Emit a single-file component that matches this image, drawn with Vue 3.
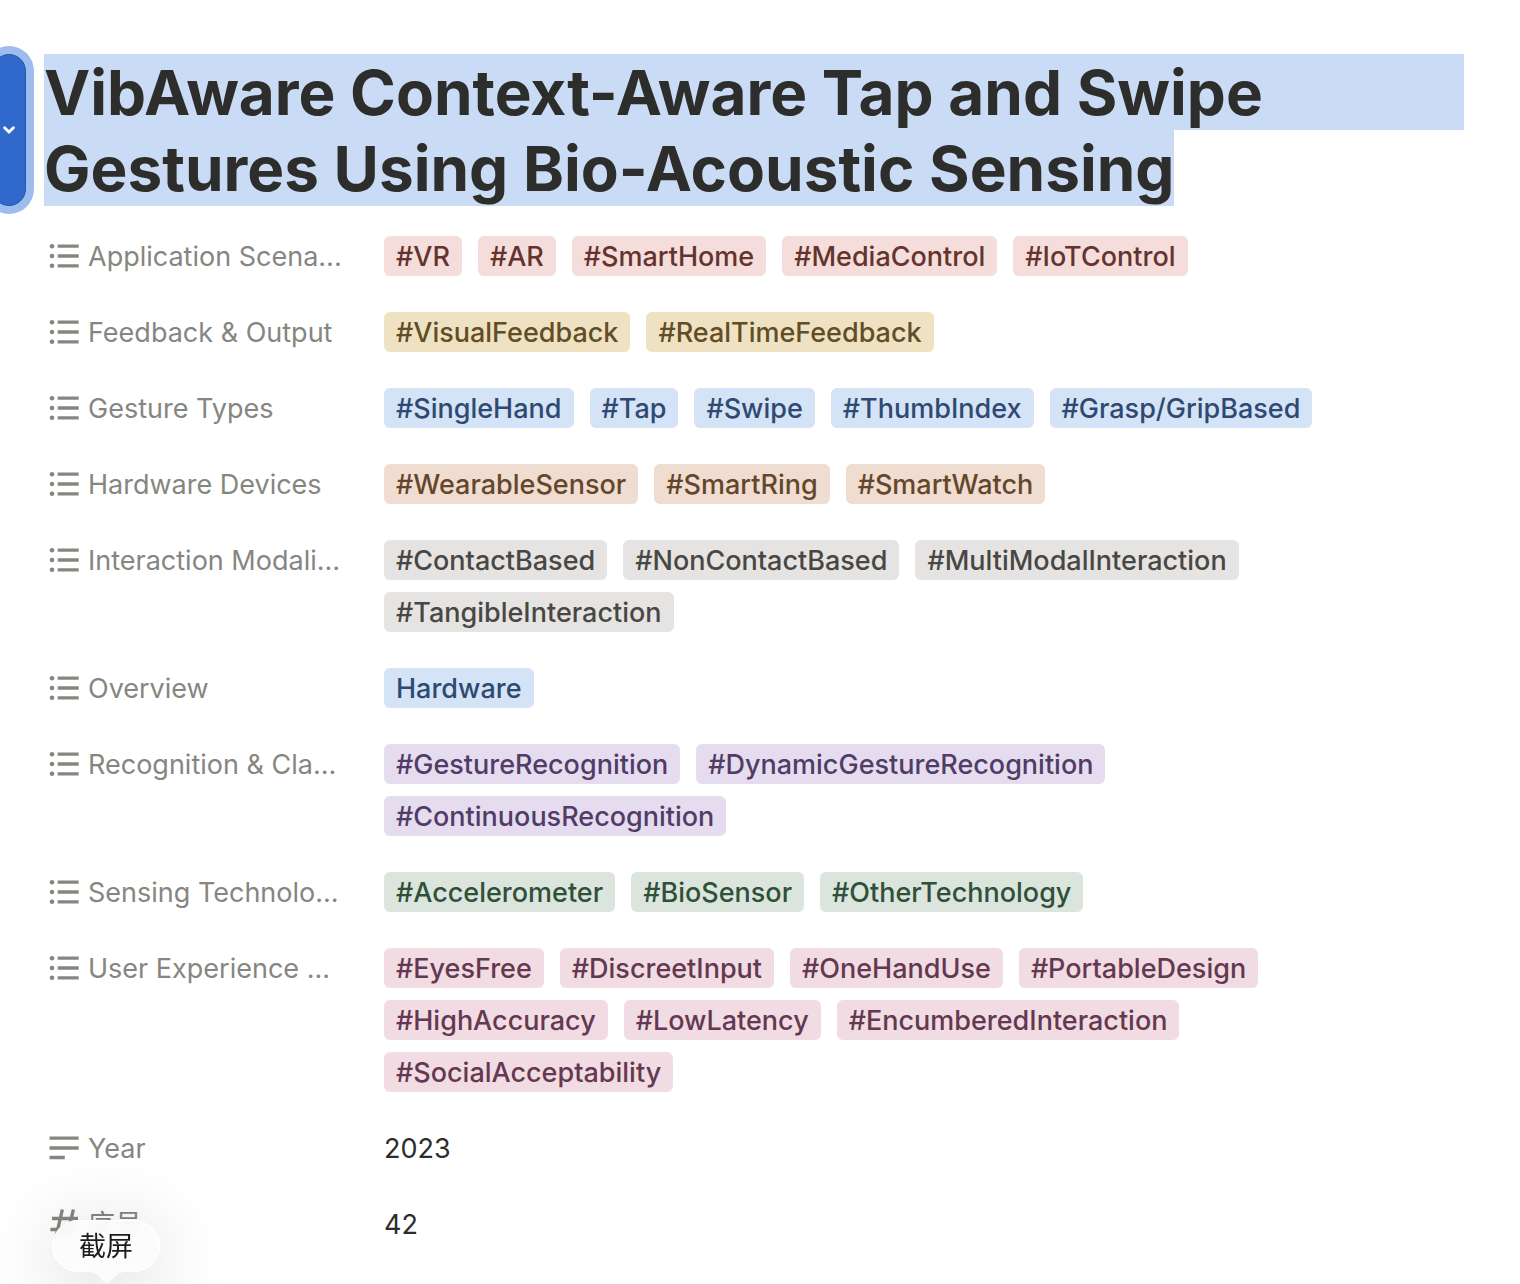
<script setup>
const properties = [
  { label: 'Application Scena...', icon: 'list', color: 'red', tags: ['#VR', '#AR', '#SmartHome', '#MediaControl', '#IoTControl'] },
  { label: 'Feedback & Output', icon: 'list', color: 'yellow', tags: ['#VisualFeedback', '#RealTimeFeedback'] },
  { label: 'Gesture Types', icon: 'list', color: 'blue', tags: ['#SingleHand', '#Tap', '#Swipe', '#ThumbIndex', '#Grasp/GripBased'] },
  { label: 'Hardware Devices', icon: 'list', color: 'orange', tags: ['#WearableSensor', '#SmartRing', '#SmartWatch'] },
  { label: 'Interaction Modali...', icon: 'list', color: 'gray', tags: ['#ContactBased', '#NonContactBased', '#MultiModalInteraction', '#TangibleInteraction'] },
  { label: 'Overview', icon: 'list', color: 'blue', tags: ['Hardware'] },
  { label: 'Recognition & Cla...', icon: 'list', color: 'purple', tags: ['#GestureRecognition', '#DynamicGestureRecognition', '#ContinuousRecognition'] },
  { label: 'Sensing Technolo...', icon: 'list', color: 'green', tags: ['#Accelerometer', '#BioSensor', '#OtherTechnology'] },
  { label: 'User Experience ...', icon: 'list', color: 'pink', tags: ['#EyesFree', '#DiscreetInput', '#OneHandUse', '#PortableDesign', '#HighAccuracy', '#LowLatency', '#EncumberedInteraction', '#SocialAcceptability'] },
  { label: 'Year', icon: 'text', value: '2023' },
  { label: '序号', icon: 'number', value: '42' },
]

const iconPaths = {
  list: 'M9.7 6.2h21M9.7 16h21M9.7 25.8h21',
  text: 'M1.5 6.2h29.2M1.5 16h29.2M1.5 25.5h15.3',
  number: 'M14.4 1.5L7.6 30.5M25.4 1.5L18.6 30.5M4 10.5h26M2.4 21.5h25.4',
}
</script>

<template>
  <main class="page">
    <button class="handle" type="button" aria-label="Title options">
      <svg width="12" height="8" viewBox="0 0 12 8" aria-hidden="true">
        <path d="M1.6 1.7L6 6l4.4-4.3" />
      </svg>
    </button>

    <h1 class="title">
      <span class="line">VibAware Context-Aware Tap and Swipe</span>
      <span class="line last">Gestures Using Bio-Acoustic Sensing</span>
    </h1>

    <dl class="properties">
      <div v-for="p in properties" :key="p.label" class="row">
        <dt class="label">
          <svg class="icon" width="32" height="32" viewBox="0 0 32 32" aria-hidden="true">
            <path :d="iconPaths[p.icon]" />
            <g v-if="p.icon === 'list'">
              <circle cx="4" cy="6.2" r="2.3" />
              <circle cx="4" cy="16" r="2.3" />
              <circle cx="4" cy="25.8" r="2.3" />
            </g>
          </svg>
          <span class="text">{{ p.label }}</span>
        </dt>
        <dd class="value">
          <span v-for="tag in p.tags" :key="tag" class="text tag" :class="p.color">{{ tag }}</span>
          <span v-if="p.value" class="text">{{ p.value }}</span>
        </dd>
      </div>
    </dl>

    <div class="tooltip" role="tooltip">
      截屏
      <svg class="tail" width="36" height="13" viewBox="0 0 36 13" aria-hidden="true">
        <path class="tail-fill" d="M0 0C8 0 11 6 15 10.500Q18 13.500 21 10.500C25 6 28 0 36 0z" />
        <path class="tail-edge" d="M0 .5C8 .5 11 6 15 10.500Q18 13.500 21 10.500C25 6 28 .5 36 .5" />
      </svg>
    </div>
  </main>
</template>

<style>
body {
  margin: 0;
  background: #fff;
}
</style>

<style scoped>
.page {
  position: relative;
  box-sizing: border-box;
  min-height: 100vh;
  padding: 54px 56px 40px 44px;
  overflow: hidden;
  color: #2d2d2b;
  font-family: Inter, "Noto Sans CJK SC", sans-serif;
  font-size: 27px;
  line-height: 38px;
}

.handle {
  position: absolute;
  top: 54px;
  left: -8px;
  display: flex;
  align-items: center;
  justify-content: center;
  width: 34px;
  height: 152px;
  padding: 0;
  border: 1px solid #2756a8;
  border-radius: 17px;
  background: #3168cc;
  box-shadow: 0 0 0 8px #9fbcee;
}

.handle path {
  fill: none;
  stroke: #fff;
  stroke-width: 2.8;
  stroke-linecap: round;
}

.title {
  margin: 0;
  font-size: 62px;
  font-weight: 700;
}

.line {
  display: block;
  padding-top: 2px;
  background: #cadbf5;
  line-height: 74px;
}

.last {
  width: fit-content;
}

.properties {
  display: flex;
  flex-direction: column;
  gap: 36px;
  margin: 30px 0 0;
}

.row {
  display: flex;
}

.label {
  display: flex;
  flex: 0 0 340px;
  gap: 8px;
  align-items: center;
  box-sizing: border-box;
  height: 40px;
  padding-left: 4px;
  color: #868680;
  white-space: nowrap;
}

.icon {
  flex: none;
  fill: #868680;
}

.icon path {
  fill: none;
  stroke: #868680;
  stroke-width: 3.3;
}

.value {
  display: flex;
  flex: 1;
  flex-wrap: wrap;
  gap: 12px 16px;
  margin: 0;
  padding-right: 16px;
}

.text {
  padding-top: 2px;
}

.tag {
  padding-right: 12px;
  padding-left: 12px;
  border-radius: 6px;
  font-weight: 500;
  white-space: nowrap;
}

.red { background: #f4dddb; color: #64332e; }
.yellow { background: #eee2c2; color: #614d26; }
.blue { background: #d5e3f6; color: #2e4a73; }
.orange { background: #efddd2; color: #66462a; }
.gray { background: #e5e4e2; color: #484744; }
.purple { background: #e6dcef; color: #503c66; }
.green { background: #dce5dd; color: #2f5039; }
.pink { background: #f1dce3; color: #643850; }

.tooltip {
  position: absolute;
  bottom: 12px;
  left: 52px;
  box-sizing: border-box;
  width: 108px;
  height: 52px;
  border: 1px solid #fff;
  border-radius: 26px;
  background: rgba(252, 252, 252, 0.92);
  backdrop-filter: blur(4px);
  box-shadow: 0 12px 80px rgba(0, 0, 0, 0.18);
  color: #1d1d1d;
  line-height: 52px;
  text-align: center;
}

.tail {
  position: absolute;
  top: 50px;
  left: 36px;
}

.tail-fill {
  fill: #fbfbfb;
}

.tail-edge {
  fill: none;
  stroke: #fff;
}
</style>
